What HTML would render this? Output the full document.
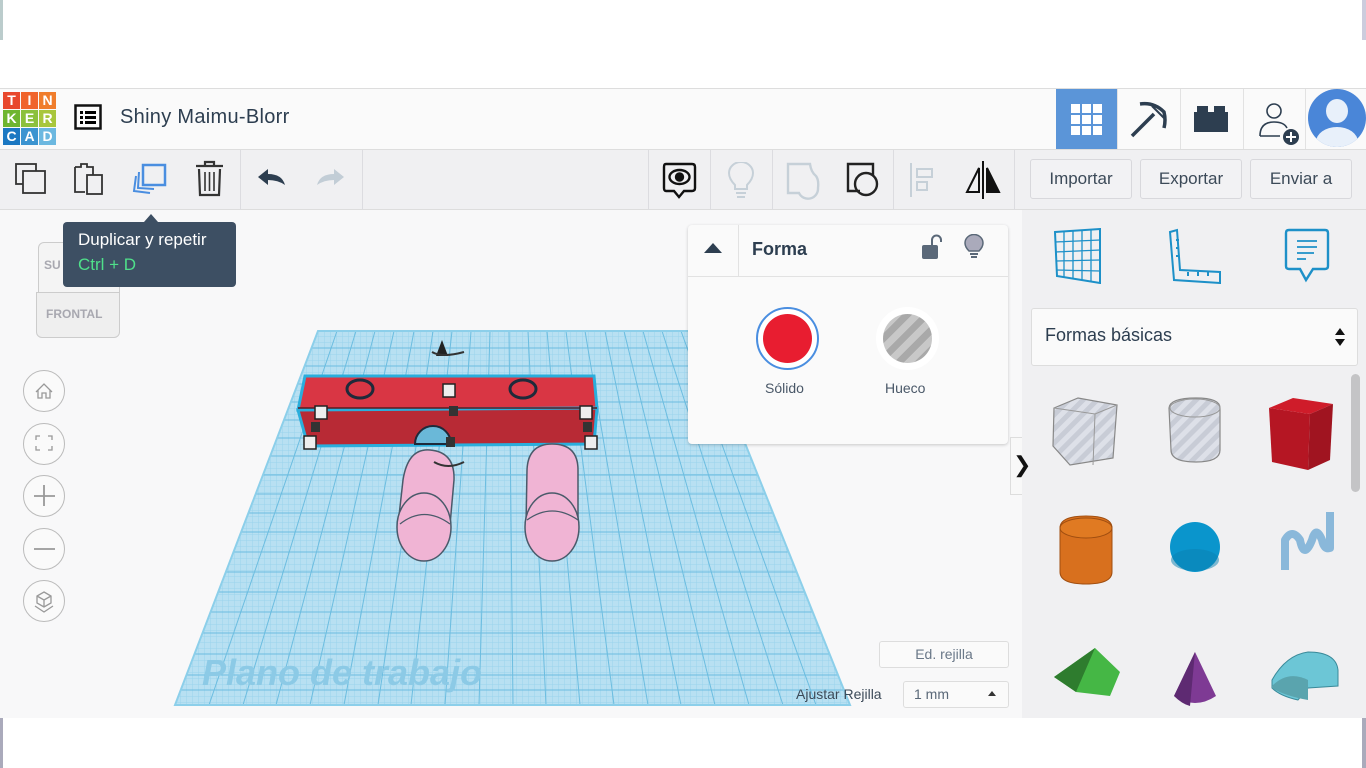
<!DOCTYPE html>
<html><head><meta charset="utf-8"><style>
*{box-sizing:border-box;margin:0;padding:0}
body{width:1366px;height:768px;overflow:hidden;background:#fff;font-family:"Liberation Sans",sans-serif;position:relative;color:#2d3e50}
.abs{position:absolute}
.hdr{left:0;top:88px;width:1366px;height:62px;background:#fafafa;border-top:1px solid #ddd;border-bottom:1px solid #ddd}
.tb{left:0;top:150px;width:1366px;height:60px;background:#f0f0f2;border-bottom:1px solid #ddd}
.main{left:0;top:210px;width:1022px;height:508px;background:#f8f8f9}
.side{left:1022px;top:210px;width:344px;height:508px;background:#f0f0f2}
.logo div{position:absolute;width:17px;height:17px;color:#fff;font-weight:bold;font-size:14px;text-align:center;line-height:17px}
.btn{top:159px;height:40px;border:1px solid #d8d8dc;border-radius:3px;background:#f2f2f4;font-size:17px;color:#3c4a58;text-align:center;line-height:38px}
.nav{left:23px;width:42px;height:42px;border:1px solid #bbb;border-radius:50%;background:#fafafa}
.sep{top:150px;width:1px;height:60px;background:#dcdce0}
</style></head><body>
<div class="abs" style="left:0;top:0;width:3px;height:40px;background:#bcc"></div>
<div class="abs" style="left:1362px;top:0;width:4px;height:40px;background:#ccd"></div>
<div class="abs hdr"></div>
<div class="abs logo" style="left:3px;top:92px">
<div style="left:0;top:0;background:#e8472c">T</div><div style="left:18px;top:0;background:#f0642c">I</div><div style="left:36px;top:0;background:#f07d2c">N</div>
<div style="left:0;top:18px;background:#6eb52f">K</div><div style="left:18px;top:18px;background:#8cc03c">E</div><div style="left:36px;top:18px;background:#a8c63c">R</div>
<div style="left:0;top:36px;background:#1b78c2">C</div><div style="left:18px;top:36px;background:#3c94d0">A</div><div style="left:36px;top:36px;background:#6cb8e0">D</div>
</div>
<svg class="abs" style="left:74px;top:104px" width="28" height="26"><rect x="1.5" y="1.5" width="25" height="23" fill="none" stroke="#111" stroke-width="2.5"/><rect x="6" y="7" width="3" height="3"/><rect x="11" y="7" width="11" height="3"/><rect x="6" y="12" width="3" height="3"/><rect x="11" y="12" width="11" height="3"/><rect x="6" y="17" width="3" height="3"/><rect x="11" y="17" width="11" height="3"/></svg>
<div class="abs" style="left:120px;top:106px;font-size:20px;color:#2d3e50;letter-spacing:.3px">Shiny Maimu-Blorr</div>
<div class="abs" style="left:1056px;top:89px;width:61px;height:60px;background:#5b95d8"></div>
<svg class="abs" style="left:1071px;top:104px" width="32" height="32" fill="#fff"><rect x="0" y="0" width="9" height="9"/><rect x="11" y="0" width="9" height="9"/><rect x="22" y="0" width="9" height="9"/><rect x="0" y="11" width="9" height="9"/><rect x="11" y="11" width="9" height="9"/><rect x="22" y="11" width="9" height="9"/><rect x="0" y="22" width="9" height="9"/><rect x="11" y="22" width="9" height="9"/><rect x="22" y="22" width="9" height="9"/></svg>
<div class="abs" style="left:1117px;top:89px;width:1px;height:60px;background:#e2e2e2"></div>
<div class="abs" style="left:1180px;top:89px;width:1px;height:60px;background:#e2e2e2"></div>
<div class="abs" style="left:1243px;top:89px;width:1px;height:60px;background:#e2e2e2"></div>
<div class="abs" style="left:1305px;top:89px;width:1px;height:60px;background:#e2e2e2"></div>
<svg class="abs" style="left:1128px;top:98px" width="42" height="42"><path d="M4 38L26 16" stroke="#2d3e50" stroke-width="3.5"/><path d="M12 6Q26 4 36 14Q38 22 36 30" fill="none" stroke="#2d3e50" stroke-width="3.5"/><path d="M24 8L36 20" stroke="#2d3e50" stroke-width="2"/></svg>
<svg class="abs" style="left:1194px;top:106px" width="36" height="26"><rect x="0" y="6" width="34" height="20" fill="#2d3e50"/><rect x="3" y="0" width="11" height="8" fill="#2d3e50"/><rect x="20" y="0" width="11" height="8" fill="#2d3e50"/></svg>
<svg class="abs" style="left:1256px;top:100px" width="46" height="46"><circle cx="18" cy="11" r="7" fill="none" stroke="#2d3e50" stroke-width="1.6"/><path d="M4 36 Q4 22 18 22 Q28 22 31 28 M4 36 H24" fill="none" stroke="#2d3e50" stroke-width="1.6"/><circle cx="35" cy="37" r="8" fill="#2d3e50"/><path d="M35 32V42M30 37H40" stroke="#fff" stroke-width="2"/></svg>
<div class="abs" style="left:1308px;top:89px;width:58px;height:58px;border-radius:50%;background:#4a86d8;overflow:hidden"><div class="abs" style="left:18px;top:10px;width:22px;height:24px;border-radius:50%;background:#e8f0fa"></div><div class="abs" style="left:8px;top:38px;width:42px;height:30px;border-radius:50%;background:#e8f0fa"></div></div>

<div class="abs tb"></div>
<svg class="abs" style="left:14px;top:162px" width="34" height="34" fill="none" stroke="#333" stroke-width="1.8"><rect x="2" y="2" width="20" height="20"/><rect x="9" y="9" width="22" height="22" fill="#f0f0f2"/></svg>
<svg class="abs" style="left:73px;top:162px" width="32" height="34" fill="none" stroke="#333" stroke-width="1.8"><path d="M2 5H8V2H14V5H20V14"/><path d="M2 5V30H12"/><rect x="14" y="13" width="15" height="19" fill="#f0f0f2"/></svg>
<svg class="abs" style="left:132px;top:162px" width="36" height="34" fill="none" stroke="#4a8ee0" stroke-width="2"><path d="M4 14L2 29L18 31" /><path d="M7 10L6 26L22 27"/><rect x="11" y="3" width="22" height="20" fill="#f0f0f2" stroke-width="2.5"/></svg>
<svg class="abs" style="left:194px;top:160px" width="32" height="38" fill="none" stroke="#333" stroke-width="2.2"><path d="M2 6H29M11 6V2H20V6"/><path d="M5 9L6 35H25L26 9"/><path d="M11 12V31M15.5 12V31M20 12V31" stroke-width="1.6"/></svg>
<div class="abs sep" style="left:240px"></div>
<svg class="abs" style="left:256px;top:166px" width="32" height="24"><path d="M2 11L12 3V8Q26 8 29 19Q22 14 12 14V19Z" fill="#2d3e50"/></svg>
<svg class="abs" style="left:314px;top:166px" width="32" height="24"><path d="M30 11L20 3V8Q6 8 3 19Q10 14 20 14V19Z" fill="#c2cdd6"/></svg>
<div class="abs sep" style="left:362px"></div>
<div class="abs sep" style="left:648px"></div>
<svg class="abs" style="left:662px;top:162px" width="36" height="38" fill="none" stroke="#111" stroke-width="2.4"><path d="M4 2H30Q33 2 33 5V26Q33 29 30 29H22L17 35L12 29H4Q2 29 2 26V5Q2 2 4 2Z"/><ellipse cx="17.5" cy="15" rx="10" ry="7"/><circle cx="17.5" cy="15" r="3.5" fill="#111"/></svg>
<div class="abs sep" style="left:710px"></div>
<svg class="abs" style="left:727px;top:162px" width="28" height="38" fill="none" stroke="#c6d0d8" stroke-width="2"><path d="M8 23Q2 17 2 11A12 11 0 0 1 26 11Q26 17 20 23V27H8Z"/><path d="M9 31H19M10 35H18"/></svg>
<div class="abs sep" style="left:772px"></div>
<svg class="abs" style="left:786px;top:162px" width="36" height="38" fill="none" stroke="#c6d0d8" stroke-width="2.4"><path d="M2 2H24Q25 10 30 14Q33 18 32 26A10 10 0 0 1 13 31H2Z"/></svg>
<svg class="abs" style="left:846px;top:162px" width="36" height="38" fill="none" stroke="#222" stroke-width="2.4"><path d="M14 29H2V2H27V13"/><circle cx="20" cy="22" r="11"/></svg>
<div class="abs sep" style="left:893px"></div>
<svg class="abs" style="left:908px;top:162px" width="30" height="36" fill="none" stroke="#c6d0d8" stroke-width="2"><path d="M3 1V35"/><rect x="9" y="7" width="15" height="8"/><rect x="9" y="20" width="10" height="8"/></svg>
<svg class="abs" style="left:963px;top:160px" width="40" height="40" fill="none" stroke="#111" stroke-width="2"><path d="M20 1V39"/><path d="M16 8L4 32H16Z"/><path d="M24 8L36 32H24Z" fill="#111"/></svg>
<div class="abs sep" style="left:1014px"></div>
<div class="abs btn" style="left:1030px;width:102px">Importar</div>
<div class="abs btn" style="left:1140px;width:102px">Exportar</div>
<div class="abs btn" style="left:1250px;width:102px">Enviar a</div>

<div class="abs main"></div>
<div class="abs side"></div>

<svg class="abs" style="left:0;top:210px" width="1022" height="508" viewBox="0 210 1022 508">
<defs>
<pattern id="g" width="6" height="6" patternUnits="userSpaceOnUse"><path d="M0 0H6M0 0V6" stroke="#9ad3ec" stroke-width="1"/></pattern>
<clipPath id="c"><polygon points="318,331 700,331 850,705 175,705"/></clipPath>
</defs>
<polygon points="318,331 700,331 850,705 175,705" fill="#b8e0f2"/>
<g clip-path="url(#c)">
<rect x="150" y="320" width="720" height="400" fill="url(#g)"/>
<g stroke="#6cbde0" stroke-width="1">
<path d="M337 331L209 705M356 331L243 705M375 331L276 705M394 331L310 705M414 331L344 705M433 331L378 705M452 331L411 705M471 331L445 705M490 331L479 705M509 331L513 705M528 331L546 705M547 331L580 705M566 331L614 705M585 331L648 705M605 331L681 705M624 331L715 705M643 331L749 705M662 331L783 705M681 331L816 705"/>
<path d="M150 348H870M150 366H870M150 384H870M150 402H870M150 420H870M150 438H870M150 456H870M150 475H870M150 494H870M150 513H870M150 532H870M150 552H870M150 572H870M150 592H870M150 612H870M150 633H870M150 654H870M150 675H870M150 690H870"/>
</g>
</g>
<polygon points="318,331 700,331 850,705 175,705" fill="none" stroke="#8ccfea" stroke-width="2"/>
<text x="202" y="685" font-size="36" font-weight="bold" font-style="italic" fill="#8ccae6" font-family="Liberation Sans">Plano de trabajo</text>
<polygon points="305,376 594,376 597,408 298,410" fill="#d93644" stroke="#2aaedc" stroke-width="3"/>
<polygon points="298,410 597,408 594,444 308,446" fill="#b82a35" stroke="#2aaedc" stroke-width="3"/>
<path d="M298 408H597" stroke="#5a1a20" stroke-width="1.5"/>
<ellipse cx="360" cy="389" rx="13" ry="9" fill="none" stroke="#1e2a3a" stroke-width="3"/>
<ellipse cx="523" cy="389" rx="13" ry="9" fill="none" stroke="#1e2a3a" stroke-width="3"/>
<path d="M415 444A18 18 0 0 1 451 444Z" fill="#6ab8d8" stroke="#1e2a3a" stroke-width="2"/>
<g fill="#f0b4d4" stroke="#4a5a6a" stroke-width="1.5">
<path d="M403 480Q408 448 430 450Q455 452 454 480L450 525L398 525Z"/>
<ellipse cx="424" cy="527" rx="27" ry="34"/>
<path d="M527 470Q528 444 552 444Q578 444 578 470L578 525L526 525Z"/>
<ellipse cx="552" cy="527" rx="27" ry="34"/>
</g>
<path d="M400 524Q424 505 450 524M527 520Q552 502 578 520" fill="none" stroke="#4a5a6a" stroke-width="1.3"/>
<g fill="#eee" stroke="#222" stroke-width="1.5">
<rect x="443" y="384" width="12" height="13"/><rect x="315" y="406" width="12" height="13"/><rect x="580" y="406" width="12" height="13"/>
<rect x="304" y="436" width="12" height="13"/><rect x="585" y="436" width="12" height="13"/>
</g>
<g fill="#333"><rect x="449" y="406" width="9" height="10"/><rect x="311" y="422" width="9" height="10"/><rect x="583" y="422" width="9" height="10"/><rect x="446" y="437" width="9" height="10"/></g>
<path d="M442 340L436 356H448Z" fill="#222"/>
<path d="M432 352Q442 358 464 352M434 462Q448 470 464 462" stroke="#333" stroke-width="2" fill="none"/>
</svg>

<div class="abs" style="left:38px;top:242px;width:82px;height:52px;background:#f4f4f4;border:1px solid #ccc;border-radius:6px 6px 0 0"></div>
<div class="abs" style="left:36px;top:292px;width:84px;height:46px;background:#efefef;border:1px solid #ccc;border-radius:0 0 6px 6px"></div>
<div class="abs" style="left:46px;top:307px;font-size:12px;font-weight:bold;color:#a8a8b0">FRONTAL</div>
<div class="abs" style="left:44px;top:258px;font-size:12px;font-weight:bold;color:#a8a8b0">SU</div>
<div class="abs" style="left:144px;top:214px;width:0;height:0;border-left:7px solid transparent;border-right:7px solid transparent;border-bottom:8px solid #3d4f63"></div>
<div class="abs" style="left:63px;top:222px;width:173px;height:65px;background:#3d4f63;border-radius:4px"></div>
<div class="abs" style="left:78px;top:230px;font-size:17px;color:#fff">Duplicar y repetir</div>
<div class="abs" style="left:78px;top:255px;font-size:17px;color:#4fe08a">Ctrl + D</div>

<div class="abs nav" style="top:370px"></div>
<div class="abs nav" style="top:423px"></div>
<div class="abs nav" style="top:475px"></div>
<div class="abs nav" style="top:528px"></div>
<div class="abs nav" style="top:580px"></div>
<svg class="abs" style="left:23px;top:370px" width="42" height="252" fill="none" stroke="#999" stroke-width="1.3">
<path d="M13 22L21 14L29 22M15 20V28H19V23H23V28H27V20"/>
<path d="M13 70V66H17M25 66H29V70M13 76V80H17M25 80H29V76"/>
<path d="M21 115V136M11 126H32" stroke-width="1.8"/>
<path d="M11 179H32" stroke-width="1.8"/>
<path d="M21 222L28 226V233L21 237L14 233V226Z M14 226L21 230L28 226M21 230V237M12 236L21 242L30 236"/>
</svg>

<div class="abs" style="left:688px;top:225px;width:320px;height:219px;background:#fafafa;border-radius:4px;box-shadow:0 1px 3px rgba(0,0,0,.2)"></div>
<div class="abs" style="left:688px;top:276px;width:320px;height:1px;background:#e2e2e2"></div>
<div class="abs" style="left:738px;top:225px;width:1px;height:51px;background:#e2e2e2"></div>
<div class="abs" style="left:704px;top:243px;width:0;height:0;border-left:9px solid transparent;border-right:9px solid transparent;border-bottom:10px solid #2d3e50"></div>
<div class="abs" style="left:752px;top:239px;font-size:18px;font-weight:bold;color:#2d3e50">Forma</div>
<svg class="abs" style="left:920px;top:234px" width="22" height="26"><path d="M12 12V6A4.5 4.5 0 0 1 21 6V8" fill="none" stroke="#5a6878" stroke-width="2"/><rect x="2" y="11" width="16" height="14" rx="2" fill="#5a6878"/></svg>
<svg class="abs" style="left:963px;top:234px" width="22" height="26"><path d="M6 17Q2 13 2 9A9 8.5 0 0 1 20 9Q20 13 16 17Z" fill="#aab" stroke="#5a6878" stroke-width="1.5"/><rect x="7" y="19" width="8" height="2" fill="#5a6878"/><rect x="8" y="22" width="6" height="2" fill="#5a6878"/></svg>
<div class="abs" style="left:756px;top:307px;width:63px;height:63px;border-radius:50%;border:2px solid #4a8ee0;background:#fff"></div>
<div class="abs" style="left:763px;top:314px;width:49px;height:49px;border-radius:50%;background:#e81d30"></div>
<div class="abs" style="left:876px;top:307px;width:63px;height:63px;border-radius:50%;background:#fff"></div>
<div class="abs" style="left:883px;top:314px;width:49px;height:49px;border-radius:50%;background:repeating-linear-gradient(135deg,#a9a9a9 0 7px,#c8c8c8 7px 14px)"></div>
<div class="abs" style="left:765px;top:380px;font-size:14px;color:#4a5868">Sólido</div>
<div class="abs" style="left:885px;top:380px;font-size:14px;color:#4a5868">Hueco</div>
<div class="abs" style="left:1010px;top:437px;width:12px;height:58px;background:#f8f8f8;border:1px solid #ddd;border-right:none"></div>
<div class="abs" style="left:1013px;top:452px;font-size:22px;color:#111">❯</div>

<svg class="abs" style="left:1052px;top:228px" width="52" height="56" fill="none" stroke="#1d90c8" stroke-width="2"><path d="M3 4L48 1V55L5 48Z"/><path d="M3 14L48 12M3 24L48 22M4 33L48 32M4 42L48 43M12 4L12 49M21 3L21 51M30 2L30 52M39 2L39 53" stroke-width="1.3"/></svg>
<svg class="abs" style="left:1168px;top:228px" width="56" height="56" fill="none" stroke="#1d90c8" stroke-width="2"><path d="M2 4L9 2L12 42L52 44L52 55L6 52Z"/><path d="M8 12H11M8 20H11M8 28H11M20 44V48M30 44V48M40 44V48"/></svg>
<svg class="abs" style="left:1284px;top:228px" width="48" height="56" fill="none" stroke="#1d90c8" stroke-width="2.4"><path d="M5 2H41Q44 2 44 5V38Q44 41 41 41H29L22 52L16 41H5Q2 41 2 38V5Q2 2 5 2Z"/><path d="M13 13H33M13 19H33M13 25H30M13 31H22" stroke-width="1.8"/></svg>
<div class="abs" style="left:1031px;top:308px;width:327px;height:58px;background:#fafafa;border:1px solid #ddd;border-radius:3px"></div>
<div class="abs" style="left:1045px;top:325px;font-size:18px;color:#2d3e50">Formas básicas</div>
<div class="abs" style="left:1335px;top:328px;width:0;height:0;border-left:5px solid transparent;border-right:5px solid transparent;border-bottom:7px solid #111"></div>
<div class="abs" style="left:1335px;top:339px;width:0;height:0;border-left:5px solid transparent;border-right:5px solid transparent;border-top:7px solid #111"></div>
<div class="abs" style="left:1351px;top:374px;width:9px;height:118px;background:#c4c4c6;border-radius:5px"></div>
<svg class="abs" style="left:1040px;top:390px" width="310" height="328">
<defs><pattern id="h" width="10" height="10" patternUnits="userSpaceOnUse" patternTransform="rotate(45)"><rect width="10" height="10" fill="#c8ccd6"/><rect width="5" height="10" fill="#dde0e8"/></pattern></defs>
<path d="M14 18L38 8L77 15L73 68L30 75L13 56Z" fill="url(#h)" stroke="#888" stroke-width="1.2"/><path d="M14 18L55 24L77 15M55 24L53 75" fill="none" stroke="#999"/>
<path d="M129 18Q130 8 156 8Q180 8 180 18V60Q180 72 156 72Q131 72 131 60Z" fill="url(#h)" stroke="#888" stroke-width="1.2"/><ellipse cx="155" cy="18" rx="25" ry="9" fill="none" stroke="#999"/>
<path d="M229 18L270 24L268 80L232 72Z" fill="#b51623"/><path d="M229 18L253 8L293 14L270 24Z" fill="#cf1c2a"/><path d="M270 24L293 14L290 70L268 80Z" fill="#a01420"/>
<path d="M20 138Q20 126 46 126Q72 126 72 138V182Q72 194 46 194Q20 194 20 182Z" fill="#d8701e" stroke="#a04e10"/><ellipse cx="46" cy="138" rx="26" ry="10" fill="#e07a22" stroke="#a04e10"/>
<circle cx="155" cy="157" r="25" fill="#0a95cc"/><ellipse cx="155" cy="170" rx="24" ry="11" fill="#0a80b0" opacity=".5"/>
<path d="M245 180V150Q252 138 260 150Q264 170 272 150Q276 135 282 150Q284 160 290 158V122" fill="none" stroke="#8ab8da" stroke-width="8" stroke-linejoin="round"/>
<path d="M14 287L55 258L80 282L70 306L36 302Z" fill="#45b745"/><path d="M14 287L55 258L36 302Z" fill="#2e7c2e"/>
<path d="M155 262L134 306Q155 320 176 306Z" fill="#7e3a94"/><path d="M155 262L134 306Q142 314 150 316Z" fill="#5e2a72"/>
<path d="M232 290Q246 265 268 262Q296 262 298 280V296L268 298L258 310Q240 306 232 298Z" fill="#6cc6d6" stroke="#3a8a9a"/><path d="M232 296Q248 280 268 290V310Q245 306 232 298Z" fill="#5aa4ae"/>
</svg>

<div class="abs" style="left:879px;top:641px;width:130px;height:27px;border:1px solid #ddd;border-radius:3px;background:#fafafa;font-size:14px;color:#6a7888;text-align:center;line-height:25px">Ed. rejilla</div>
<div class="abs" style="left:796px;top:686px;font-size:14px;color:#3c4a58">Ajustar Rejilla</div>
<div class="abs" style="left:903px;top:681px;width:106px;height:27px;border:1px solid #ddd;border-radius:3px;background:#fafafa;font-size:14px;color:#5a6878;padding-left:10px;line-height:25px">1 mm</div>
<div class="abs" style="left:988px;top:691px;width:0;height:0;border-left:4px solid transparent;border-right:4px solid transparent;border-bottom:5px solid #333"></div>
<div class="abs" style="left:0;top:718px;width:3px;height:50px;background:#aab"></div>
<div class="abs" style="left:1362px;top:718px;width:4px;height:50px;background:#aab"></div>
</body></html>
